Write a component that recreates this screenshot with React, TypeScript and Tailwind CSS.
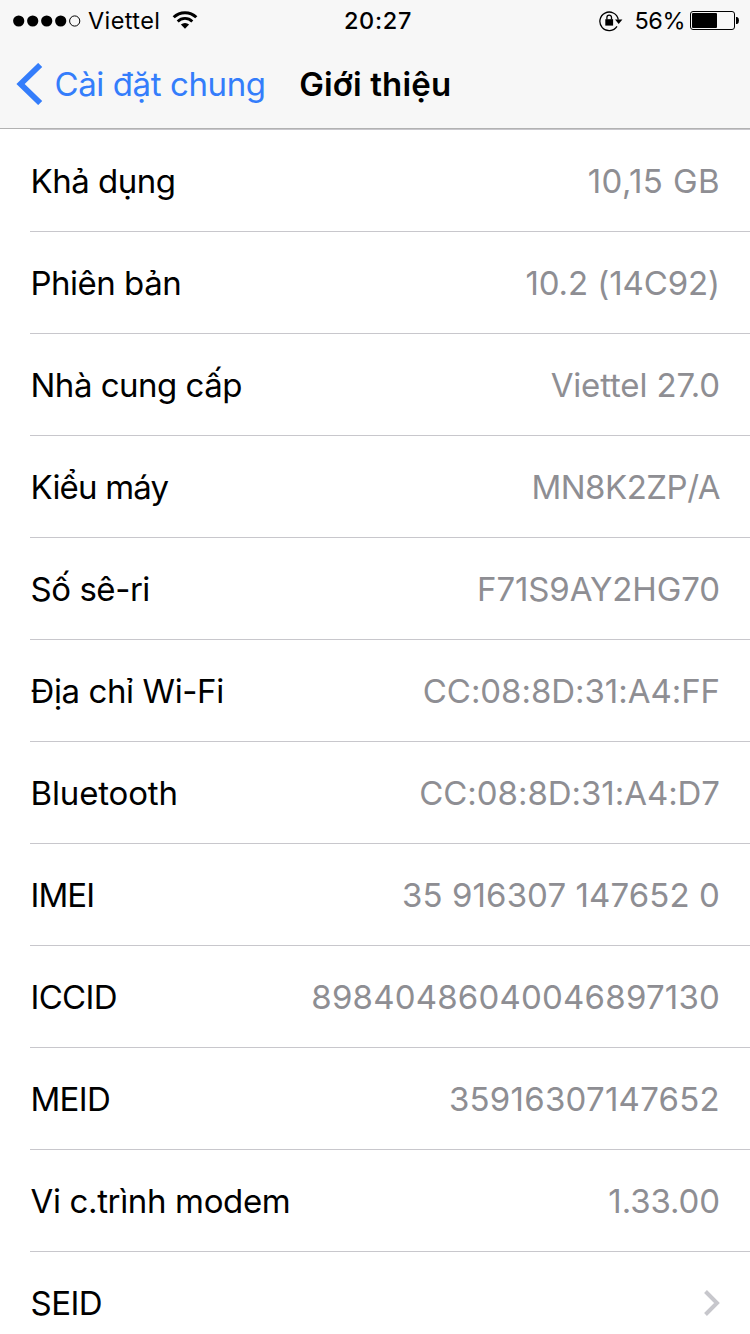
/**
 * Settings > General > About screen
 * Status bar, navigation bar and the list of device details
 */

type Row = {
  label: string;
  value?: string;
  labelClass: string;
  valueClass?: string;
};

const rows: Row[] = [
  { label: 'Khả dụng', value: '10,15 GB', labelClass: 'tracking-[-0.5px]', valueClass: 'tracking-[0.4px]' },
  { label: 'Phiên bản', value: '10.2 (14C92)', labelClass: 'tracking-[-0.5px]', valueClass: 'tracking-[-0.1px]' },
  { label: 'Nhà cung cấp', value: 'Viettel 27.0', labelClass: 'tracking-[-0.5px]', valueClass: 'tracking-[-0.15px]' },
  { label: 'Kiểu máy', value: 'MN8K2ZP/A', labelClass: 'tracking-[-0.8px]', valueClass: 'tracking-[-0.5px]' },
  { label: 'Số sê-ri', value: 'F71S9AY2HG70', labelClass: 'tracking-[-0.45px]', valueClass: 'tracking-[-0.1px]' },
  { label: 'Địa chỉ Wi-Fi', value: 'CC:08:8D:31:A4:FF', labelClass: 'tracking-[-0.4px]', valueClass: 'tracking-[-0.05px]' },
  { label: 'Bluetooth', value: 'CC:08:8D:31:A4:D7', labelClass: 'tracking-[-0.15px]', valueClass: 'tracking-[-0.05px]' },
  { label: 'IMEI', value: '35 916307 147652 0', labelClass: 'tracking-[-0.9px]', valueClass: 'tracking-[0.1px]' },
  { label: 'ICCID', value: '89840486040046897130', labelClass: 'tracking-[-0.7px]', valueClass: 'tracking-[0.2px]' },
  { label: 'MEID', value: '35916307147652', labelClass: 'tracking-[-0.7px]', valueClass: 'tracking-[0.25px]' },
  { label: 'Vi c.trình modem', value: '1.33.00', labelClass: 'tracking-[-0.35px]', valueClass: 'tracking-[-0.1px]' },
  { label: 'SEID', labelClass: 'tracking-[-0.5px]' },
];

function SignalDots() {
  return (
    <svg width="68" height="12" viewBox="0 0 68 12" className="shrink-0">
      <circle cx="5.7" cy="6" r="5.6" />
      <circle cx="19.7" cy="6" r="5.6" />
      <circle cx="33.7" cy="6" r="5.6" />
      <circle cx="47.7" cy="6" r="5.6" />
      <circle cx="61.7" cy="6" r="5.1" fill="none" stroke="black" />
    </svg>
  );
}

function WifiIcon() {
  return (
    <svg width="26" height="18" viewBox="0 0 26 18" fill="none" stroke="black" className="shrink-0">
      <path d="M1.7 6.3a16 16 0 0 1 22.6 0" strokeWidth="3" />
      <path d="M5.7 10.5a10.3 10.3 0 0 1 14.6 0" strokeWidth="2.8" />
      <path d="M8.9 13.6a5.9 5.9 0 0 1 8.2 0L13 17.8z" fill="black" stroke="none" />
    </svg>
  );
}

function RotationLockIcon() {
  return (
    <svg width="24" height="22" viewBox="0 0 24 22" fill="none" stroke="black" className="shrink-0">
      <path d="M19.3 9.6A9.3 9.3 0 1 0 18 16.4" strokeWidth="1.3" />
      <path d="M16 9.6h7.4l-3.7 4.4z" fill="black" stroke="none" />
      <rect x="6.3" y="9.2" width="7.8" height="6.4" fill="black" stroke="none" />
      <path d="M7.9 9.6V7.4a2.3 2.3 0 0 1 4.6 0v2.2" strokeWidth="1.3" />
    </svg>
  );
}

function BatteryIcon() {
  return (
    <svg width="50" height="20" viewBox="0 0 50 20" className="shrink-0">
      <rect x="0.5" y="0.5" width="44" height="18" rx="2.5" fill="none" stroke="black" />
      <rect x="2" y="2" width="25" height="15" rx="1" />
      <path d="M46 6h1.2q1.8 0.8 1.8 3.5t-1.8 3.5H46z" />
    </svg>
  );
}

function StatusBar() {
  return (
    <div className="grid h-10 grid-cols-3 items-center pt-px text-[23.5px]">
      <div className="flex items-center pl-[13px]">
        <SignalDots />
        <span className="ml-[7px] tracking-[0.4px]">Viettel</span>
        <span className="ml-3 -mt-0.5">
          <WifiIcon />
        </span>
      </div>
      <div className="pl-1.5 text-center font-medium tracking-[0.7px]">20:27</div>
      <div className="flex items-center justify-end pr-2.5">
        <RotationLockIcon />
        <span className="mr-[5px] ml-3 tracking-[-0.5px]">56%</span>
        <BatteryIcon />
      </div>
    </div>
  );
}

function NavBar() {
  return (
    <div className="flex h-[88px] items-center pl-4 text-[33px]">
      <a href="#" className="flex items-center text-[#347dfb]">
        <svg width="27" height="42" viewBox="0 0 27 42" fill="none" stroke="currentColor" className="shrink-0">
          <path d="M24.2 2 4.6 21l19.6 19" strokeWidth="5.8" />
        </svg>
        <span className="ml-[11.5px] pt-0.5 whitespace-nowrap tracking-[-0.4px]">Cài đặt chung</span>
      </a>
      <h1 className="ml-[33.5px] pt-0.5 whitespace-nowrap font-semibold tracking-[0.15px]">Giới thiệu</h1>
    </div>
  );
}

function DetailRow({ label, value, labelClass, valueClass }: Row) {
  return (
    <li className="flex h-[102px] shrink-0 items-center justify-between border-b border-[#c8c7cc] pr-[30px]">
      <span className={`pt-0.5 pl-[0.5px] whitespace-nowrap ${labelClass}`}>{label}</span>
      {value ? (
        <span className={`pt-0.5 whitespace-nowrap text-[#8e8e93] ${valueClass}`}>{value}</span>
      ) : (
        <svg width="17" height="28" viewBox="0 0 17 28" fill="none" stroke="#c7c7cc" className="shrink-0">
          <path d="M2.5 2.5 14 14 2.5 25.5" strokeWidth="4" />
        </svg>
      )}
    </li>
  );
}

export default function App() {
  return (
    <div className="flex h-[1334px] w-[750px] flex-col overflow-hidden bg-white font-['Inter',sans-serif] text-black">
      <header className="shrink-0 border-b border-[#b2b2b2] bg-[#f7f7f7]">
        <StatusBar />
        <NavBar />
      </header>

      <main className="flex-1 overflow-hidden pl-[30px]">
        <ul className="border-t border-[#c8c7cc] text-[33px]">
          {rows.map((row) => (
            <DetailRow key={row.label} {...row} />
          ))}
        </ul>
      </main>
    </div>
  );
}
